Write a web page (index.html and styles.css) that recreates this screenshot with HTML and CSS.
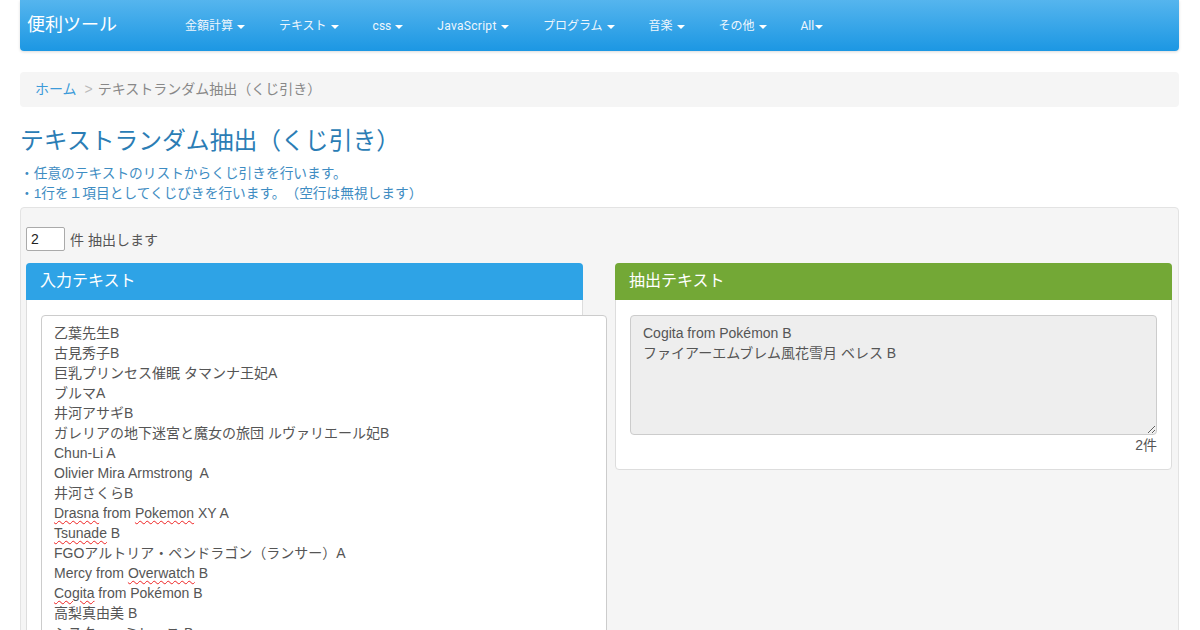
FILE: index.html
```html
<!DOCTYPE html>
<html lang="ja">
<head>
    <meta charset="UTF-8">
    <meta name="viewport" content="width=device-width, initial-scale=1.0">
    <title>テキストランダム抽出（くじ引き）</title>
    <link rel="stylesheet" href="styles.css">
</head>
<body>
    <div class="container">
        <nav class="navbar">
            <a class="brand" href="#">便利ツール</a>
            <ul class="menu">
                <li>金額計算 <span class="caret"></span></li>
                <li>テキスト <span class="caret"></span></li>
                <li>css <span class="caret"></span></li>
                <li>JavaScript <span class="caret"></span></li>
                <li>プログラム <span class="caret"></span></li>
                <li>音楽 <span class="caret"></span></li>
                <li>その他 <span class="caret"></span></li>
                <li>All<span class="caret"></span></li>
            </ul>
        </nav>

        <ol class="breadcrumb">
            <li><a href="#">ホーム</a></li>
            <li class="sep">&gt;</li>
            <li class="current">テキストランダム抽出（くじ引き）</li>
        </ol>

        <h1 class="page-title">テキストランダム抽出（くじ引き）</h1>
        <p class="desc">・任意のテキストのリストからくじ引きを行います。</p>
        <p class="desc">・1行を１項目としてくじびきを行います。（空行は無視します）</p>

        <div class="well">
            <div class="count-row">
                <input type="text" class="count" value="2">
                <span>件 抽出します</span>
            </div>

            <div class="columns">
                <div class="panel panel-input">
                    <div class="panel-heading">入力テキスト</div>
                    <div class="panel-body">
                        <div class="textbox">乙葉先生B
古見秀子B
巨乳プリンセス催眠 タマンナ王妃A
ブルマA
井河アサギB
ガレリアの地下迷宮と魔女の旅団 ルヴァリエール妃B
Chun-Li A
Olivier Mira Armstrong  A
井河さくらB
<span class="typo">Drasna</span> from <span class="typo">Pokemon</span> XY A
<span class="typo">Tsunade</span> B
FGOアルトリア・ペンドラゴン（ランサー）A
Mercy from <span class="typo">Overwatch</span> B
<span class="typo">Cogita</span> from Pokémon B
高梨真由美 B
シスター・ミレーユ B</div>
                    </div>
                </div>

                <div class="panel panel-output">
                    <div class="panel-heading">抽出テキスト</div>
                    <div class="panel-body">
                        <textarea class="result" readonly>Cogita from Pokémon B
ファイアーエムブレム風花雪月 ベレス B</textarea>
                        <div class="result-count">2件</div>
                    </div>
                </div>
            </div>
        </div>
    </div>
</body>
</html>
```

FILE: styles.css
```css
body {
    margin: 0;
    font-family: "Liberation Sans", "Noto Sans CJK JP", sans-serif;
    font-size: 14px;
    color: #555;
    background: #fff;
    overflow: hidden;
    text-spacing-trim: space-all;
}
.container {
    margin: 0 21px 0 20px;
}

/* navbar */
.navbar {
    display: flex;
    align-items: center;
    height: 51px;
    padding-left: 7px;
    background: linear-gradient(#55b5ee, #1c97e3);
    border-radius: 0 0 4px 4px;
    box-shadow: 0 1px 3px rgba(0, 0, 0, 0.15);
}
.brand {
    color: #fff;
    font-size: 18px;
    line-height: 24px;
    text-decoration: none;
    width: 141px;
    margin-top: -2px;
}
.menu {
    display: flex;
    align-items: center;
    list-style: none;
    margin: 0;
    padding: 0;
    margin-top: 1px;
}
.menu li {
    font-family: Roboto, "Noto Sans CJK JP", sans-serif;
    font-size: 12px;
    line-height: 16px;
    height: 16px;
    color: #eef6fd;
    padding: 0 17px;
    white-space: nowrap;
}
.menu li:nth-child(4) {
    letter-spacing: 0.3px;
}
.caret {
    display: inline-block;
    width: 0;
    height: 0;
    margin-left: 1px;
    vertical-align: middle;
    border-top: 4px solid #fff;
    border-left: 4px solid transparent;
    border-right: 4px solid transparent;
}

/* breadcrumb */
.breadcrumb {
    display: flex;
    list-style: none;
    margin: 21px 0 0;
    padding: 8px 15px;
    background: #f5f5f5;
    border-radius: 4px;
    font-size: 14px;
    line-height: 19px;
}
.breadcrumb a {
    color: #3d9bd9;
    text-decoration: none;
}
.breadcrumb .sep {
    color: #bbb;
    padding: 0 5px 0 8px;
}
.breadcrumb .current {
    color: #888;
}

.page-title {
    margin: 18px 0 7px;
    font-size: 23.8px;
    font-weight: normal;
    line-height: 32px;
    color: #2b7db5;
}
.desc {
    margin: 0;
    line-height: 20px;
    font-size: 13.7px;
    color: #3e8cc2;
}

/* well */
.well {
    margin-top: 3px;
    padding: 19px 6px 0 5px;
    height: 460px;
    background: #f5f5f5;
    border: 1px solid #e3e3e3;
    border-radius: 4px;
}
.count-row {
    display: flex;
    align-items: center;
    gap: 5px;
}
.count {
    width: 39px;
    height: 24px;
    box-sizing: border-box;
    padding: 2px 4px;
    border: 1px solid #aaa;
    border-radius: 2px;
    font-family: "Liberation Sans", sans-serif;
    font-size: 14px;
    color: #222;
}

.columns {
    display: grid;
    grid-template-columns: minmax(0, 1fr) minmax(0, 1fr);
    gap: 32px;
    margin-top: 12px;
}
.panel {
    min-width: 0;
    background: #fff;
    border: 1px solid #ddd;
    border-radius: 4px;
    align-self: start;
}
.panel-heading {
    height: 37px;
    line-height: 36px;
    padding: 0 14px;
    margin: -1px -1px 0;
    border-radius: 4px 4px 0 0;
    color: #fff;
    font-size: 16px;
}
.panel-input .panel-heading { background: #2ea3e6; }
.panel-output .panel-heading { background: #73a836; }
.panel-body {
    padding: 15px 14px 14px;
}
.panel-input {
    height: 400px;
}

.textbox,
.result {
    display: block;
    box-sizing: border-box;
    padding: 7px 12px;
    border: 1px solid #ccc;
    border-radius: 4px;
    font-family: "Liberation Sans", "Noto Sans CJK JP", sans-serif;
    font-size: 14px;
    line-height: 20px;
    color: #555;
    white-space: pre;
}
.textbox {
    width: 566px;
    height: 400px;
    background: #fff;
    position: relative;
    overflow: hidden;
}
.typo {
    text-decoration: underline wavy #e22;
    text-decoration-thickness: 1px;
    text-underline-offset: 2px;
}
.result {
    width: 100%;
    height: 120px;
    background: #eee;
    resize: vertical;
}
.result-count {
    text-align: right;
    line-height: 20px;
}
```
